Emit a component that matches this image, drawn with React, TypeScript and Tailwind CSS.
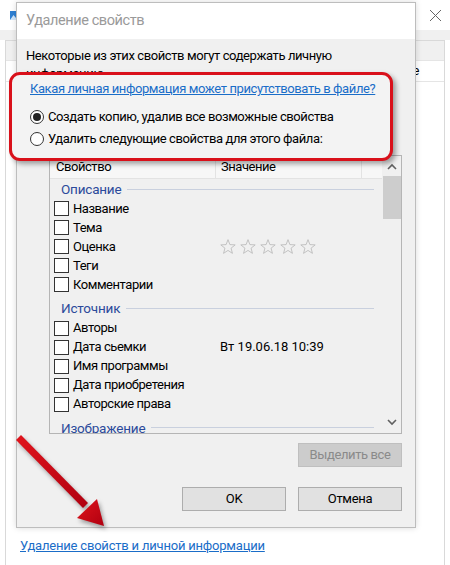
import React from "react";

const font = { fontFamily: 'Roboto, "Noto Sans", sans-serif' };

function Radio({ checked }: { checked?: boolean }) {
  return (
    <span className="flex h-[14px] w-[14px] shrink-0 items-center justify-center rounded-full border border-[#333] bg-white">
      {checked && <span className="h-[8px] w-[8px] rounded-full bg-[#222]" />}
    </span>
  );
}

function CheckRow({ label, value }: { label: string; value?: React.ReactNode }) {
  return (
    <div className="flex h-[19px] items-center">
      <span className="ml-[4px] h-[15px] w-[15px] shrink-0 border border-[#333] bg-white" />
      <span className="ml-[4px] w-[147px] text-[13px] tracking-[-0.45px] text-[#000]">{label}</span>
      <span className="text-[13px] text-[#000]">{value}</span>
    </div>
  );
}

function GroupHeader({ title, first }: { title: string; first?: boolean }) {
  return (
    <div className={`flex h-[21px] items-center ${first ? "" : "mt-[4px]"}`}>
      <span className="ml-[11px] text-[13.5px] tracking-[-0.2px] text-[#2b4a9b]">{title}</span>
      <span className="ml-[6px] mr-[8px] h-px flex-1 bg-[#c9d0de]" />
    </div>
  );
}

function Stars() {
  return (
    <span className="flex gap-[4px]">
      {[0, 1, 2, 3, 4].map((i) => (
        <svg key={i} width="16" height="15" viewBox="0 0 24 23">
          <polygon
            points="12,1 14.9,8.6 23,9 16.7,14.1 18.8,22 12,17.5 5.2,22 7.3,14.1 1,9 9.1,8.6"
            fill="none"
            stroke="#b9b9b9"
            strokeWidth="1.3"
          />
        </svg>
      ))}
    </span>
  );
}

export default function App() {
  return (
    <div className="relative h-[565px] w-[450px] overflow-hidden bg-white" style={font}>
      {/* outer properties window */}
      <div className="flex h-[30px] items-center justify-between">
        <svg className="ml-[10px]" width="10" height="9" viewBox="0 0 10 9">
          <rect width="10" height="9" fill="#2d7fd3" />
          <polygon points="0,9 3.5,4 6,7 7.5,5.5 10,9" fill="#cfe6fb" />
        </svg>
        <svg className="mr-[8px]" width="13" height="13" viewBox="0 0 13 13">
          <path d="M1 1 L12 12 M12 1 L1 12" stroke="#666" strokeWidth="1" />
        </svg>
      </div>
      <div className="h-[10px] bg-[#f0f0f0]" />
      <div className="mx-[5px] h-[525px] border-l border-r border-t border-[#d9d9d9] bg-white">
        <div className="flex h-[20px] border-b border-[#e5e5e5] bg-[#f0f0f0]" />
        <div className="flex h-[21px] items-center justify-end border-b border-[#e5e5e5] pr-[25px] text-[13px] tracking-[-0.4px] text-[#000]">
          Значение
        </div>
        <div className="mt-[453px] pl-[14px] leading-[19px]">
          <span className="text-[13px] tracking-[-0.2px] text-[#1a6dc8] underline">
            Удаление свойств и личной информации
          </span>
        </div>
      </div>

      {/* red annotation frame */}
      <div className="absolute left-[9px] top-[72px] z-10 h-[89px] w-[384px] rounded-[11px] border-[3px] border-[#d9101a] bg-[#f3f3f3] shadow-[3px_3px_5px_rgba(0,0,0,0.35)]" />

      {/* dialog */}
      <div className="absolute left-[16px] top-[2px] flex h-[526px] w-[400px] flex-col border border-[#bdbdbd] bg-[#f0f0f0] shadow-[0_0_6px_rgba(0,0,0,0.15)]">
        <div className="flex h-[36px] shrink-0 items-center bg-white pl-[9px] text-[14.5px] tracking-[-0.4px] text-[#9a9a9a]">
          Удаление свойств
        </div>
        <div className="pl-[9px] pt-[8px] text-[13px] leading-[18px] tracking-[-0.4px] text-[#000]">
          <p className="w-[330px]">Некоторые из этих свойств могут содержать личную информацию.</p>
        </div>
        <div className="relative z-20 -mt-[4px] pl-[13px] text-[13px] leading-[19px] tracking-[-0.4px]">
          <span className="text-[#1a6dc8] underline">Какая личная информация может присутствовать в файле?</span>
        </div>
        <div className="relative z-20 mt-[9px] flex flex-col gap-[3px] pl-[13px] text-[13px] tracking-[-0.4px] text-[#000]">
          <div className="flex h-[19px] items-center gap-[4px]">
            <Radio checked />
            <span>Создать копию, удалив все возможные свойства</span>
          </div>
          <div className="flex h-[19px] items-center gap-[4px]">
            <Radio />
            <span>Удалить следующие свойства для этого файла:</span>
          </div>
        </div>

        {/* property list */}
        <div className="ml-[32px] mr-[13px] mt-[7px] flex h-[279px] shrink-0 border border-[#b5b5b5] bg-[#f0f0f0]">
          <div className="flex flex-1 flex-col overflow-hidden">
            <div className="flex h-[23px] shrink-0 items-center border-b border-[#e3e3e3] bg-[#f7f7f7] text-[13px] tracking-[-0.45px] text-[#000]">
              <span className="w-[165px] pl-[6px]">Свойство</span>
              <span className="h-full border-l border-[#e3e3e3]" />
              <span className="w-[145px] pl-[5px]">Значение</span>
              <span className="h-full border-l border-[#e3e3e3]" />
            </div>
            <GroupHeader title="Описание" first />
            <CheckRow label="Название" />
            <CheckRow label="Тема" />
            <CheckRow label="Оценка" value={<Stars />} />
            <CheckRow label="Теги" />
            <CheckRow label="Комментарии" />
            <GroupHeader title="Источник" />
            <CheckRow label="Авторы" />
            <CheckRow label="Дата сьемки" value="Вт 19.06.18 10:39" />
            <CheckRow label="Имя программы" />
            <CheckRow label="Дата приобретения" />
            <CheckRow label="Авторские права" />
            <GroupHeader title="Изображение" />
          </div>
          <div className="flex w-[19px] flex-col items-center bg-[#f0f0f0]">
            <svg className="mt-[7px]" width="10" height="7" viewBox="0 0 10 7">
              <path d="M1 6 L5 2 L9 6" fill="none" stroke="#606060" strokeWidth="1.6" />
            </svg>
            <div className="mt-[6px] h-[43px] w-[18px] bg-[#cdcdcd]" />
            <div className="flex-1" />
            <svg className="mb-[7px]" width="10" height="7" viewBox="0 0 10 7">
              <path d="M1 1 L5 5 L9 1" fill="none" stroke="#606060" strokeWidth="1.6" />
            </svg>
          </div>
        </div>

        <div className="mr-[13px] mt-[9px] flex justify-end">
          <button className="h-[24px] w-[104px] border border-[#bfbfbf] bg-[#cccccc] text-[13px] tracking-[-0.4px] text-[#8a8a8a]">
            Выделить все
          </button>
        </div>
        <div className="mr-[13px] mt-[20px] flex justify-end gap-[12px]">
          <button className="h-[24px] w-[104px] border border-[#adadad] bg-[#e1e1e1] text-[13px] tracking-[-0.3px] text-[#000]">
            OK
          </button>
          <button className="h-[24px] w-[104px] border border-[#adadad] bg-[#e1e1e1] text-[13px] tracking-[-0.3px] text-[#000]">
            Отмена
          </button>
        </div>
      </div>

      {/* red arrow */}
      <svg className="absolute left-0 top-[430px] z-30" width="120" height="110" viewBox="0 430 120 110">
        <defs>
          <linearGradient id="ar" x1="0" y1="0" x2="1" y2="1">
            <stop offset="0" stopColor="#e0141c" />
            <stop offset="1" stopColor="#b00010" />
          </linearGradient>
        </defs>
        <g style={{ filter: "drop-shadow(2px 3px 2px rgba(0,0,0,0.35))" }}>
          <polygon points="16,440 21,435 88,503 83,508" fill="url(#ar)" />
          <polygon points="77,518 97,499 104,526" fill="url(#ar)" />
        </g>
      </svg>
    </div>
  );
}
